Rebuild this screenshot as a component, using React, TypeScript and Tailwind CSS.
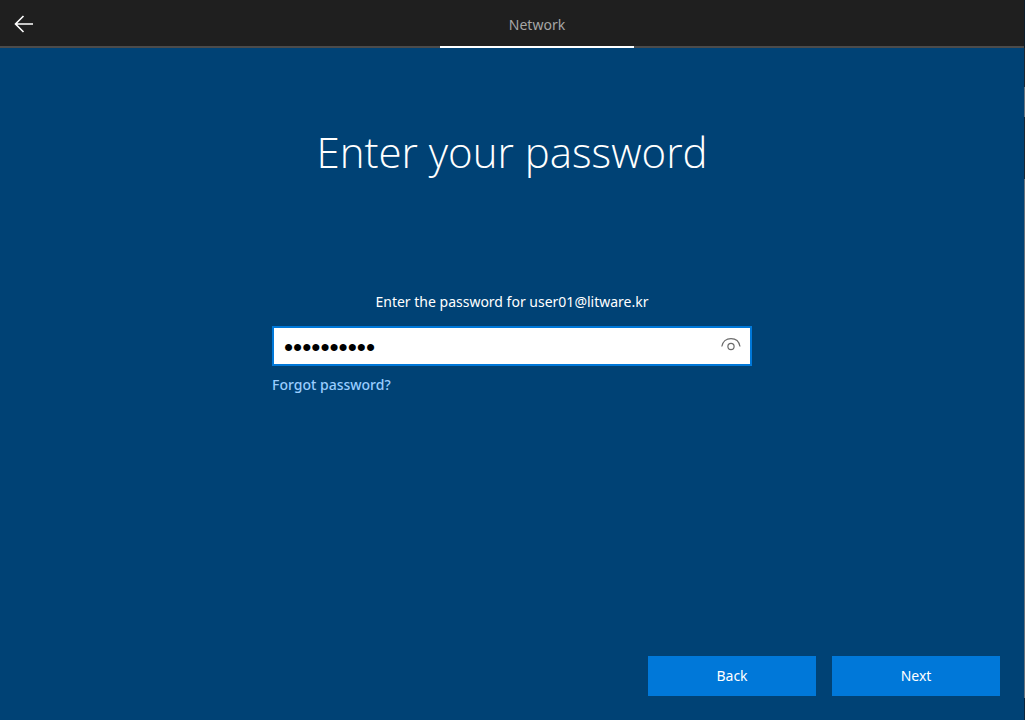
import { useState } from "react";

function BackArrow() {
  return (
    <svg width="20" height="18" viewBox="0 0 20 18" fill="none" stroke="currentColor" strokeWidth="1.6" aria-hidden="true">
      <path d="M19 9H1.500M9.500 1L1.500 9l8 8" />
    </svg>
  );
}

function RevealIcon() {
  return (
    <svg width="20" height="16" viewBox="0 0 20 16" fill="none" stroke="#6b6b6b" strokeWidth="1.2" aria-hidden="true">
      <path d="M0.800 9.500C1.600 4.800 5.200 1.600 10 1.600s8.200 3.200 9 7.900" />
      <circle cx="10" cy="9.500" r="3.100" />
    </svg>
  );
}

function ActionButton({ label, type }: { label: string; type: "button" | "submit" }) {
  return (
    <button
      type={type}
      form={type === "submit" ? "sign-in" : undefined}
      className="h-10 w-[168px] bg-[#0078d9] text-[14px] leading-5 text-white"
    >
      {label}
    </button>
  );
}

export default function App() {
  const [password, setPassword] = useState("litware123");
  const [revealed, setRevealed] = useState(false);

  return (
    <div className="flex min-h-screen bg-[#004275] font-['Noto_Sans','Open_Sans',sans-serif] text-white">
      <div className="flex min-w-0 flex-1 flex-col">
        <header className="flex h-12 bg-[#1f1f1f]">
          <div className="flex w-[50px] items-center border-b-2 border-[#4b4b4b] pt-[2px] pl-[14px]">
            <button type="button" aria-label="Go back">
              <BackArrow />
            </button>
          </div>
          <div className="flex-1 border-b-2 border-[#4b4b4b]" />
          <div className="flex w-[194px] items-center justify-center border-b-2 border-white pt-1 text-[14px] leading-5 text-[#a6a6a6]">
            Network
          </div>
          <div className="flex-1 border-b-2 border-[#4b4b4b]" />
        </header>

        <main className="flex flex-1 flex-col items-center">
          <h1 className="mt-[72px] font-['Open_Sans','Noto_Sans',sans-serif] text-[42px] leading-[64px] font-light">
            Enter your password
          </h1>
          <form id="sign-in" className="mt-[108px] flex w-[480px] flex-col" onSubmit={(e) => e.preventDefault()}>
            <label htmlFor="password" className="text-center text-[14px] leading-5">
              Enter the password for user01@litware.kr
            </label>
            <div className="mt-[14px] flex h-10 items-center border-2 border-[#0078d9] bg-white pr-[9px]">
              <input
                id="password"
                type={revealed ? "text" : "password"}
                value={password}
                onChange={(e) => setPassword(e.target.value)}
                className="h-full min-w-0 flex-1 pt-[3px] pl-[10px] font-['Liberation_Sans',sans-serif] text-[26px] text-black outline-none"
              />
              <button type="button" aria-label="Reveal password" className="pb-[2px]" onClick={() => setRevealed(!revealed)}>
                <RevealIcon />
              </button>
            </div>
            <a href="#forgot" className="mt-[9px] self-start text-[14px] leading-5 font-medium text-[#99cdff]">
              Forgot password?
            </a>
          </form>
        </main>

        <footer className="flex justify-end gap-4 px-6 pb-6">
          <ActionButton label="Back" type="button" />
          <ActionButton label="Next" type="submit" />
        </footer>
      </div>

      <div className="flex w-px flex-col bg-[#1d2833]" aria-hidden="true">
        <div className="h-12 bg-[#101d29]" />
        <div className="h-[39px]" />
        <div className="h-[30px] bg-[#68717a]" />
        <div className="h-[62px]" />
        <div className="flex-1 bg-[#68717a]" />
        <div className="h-[22px] bg-[#10263b]" />
      </div>
    </div>
  );
}
